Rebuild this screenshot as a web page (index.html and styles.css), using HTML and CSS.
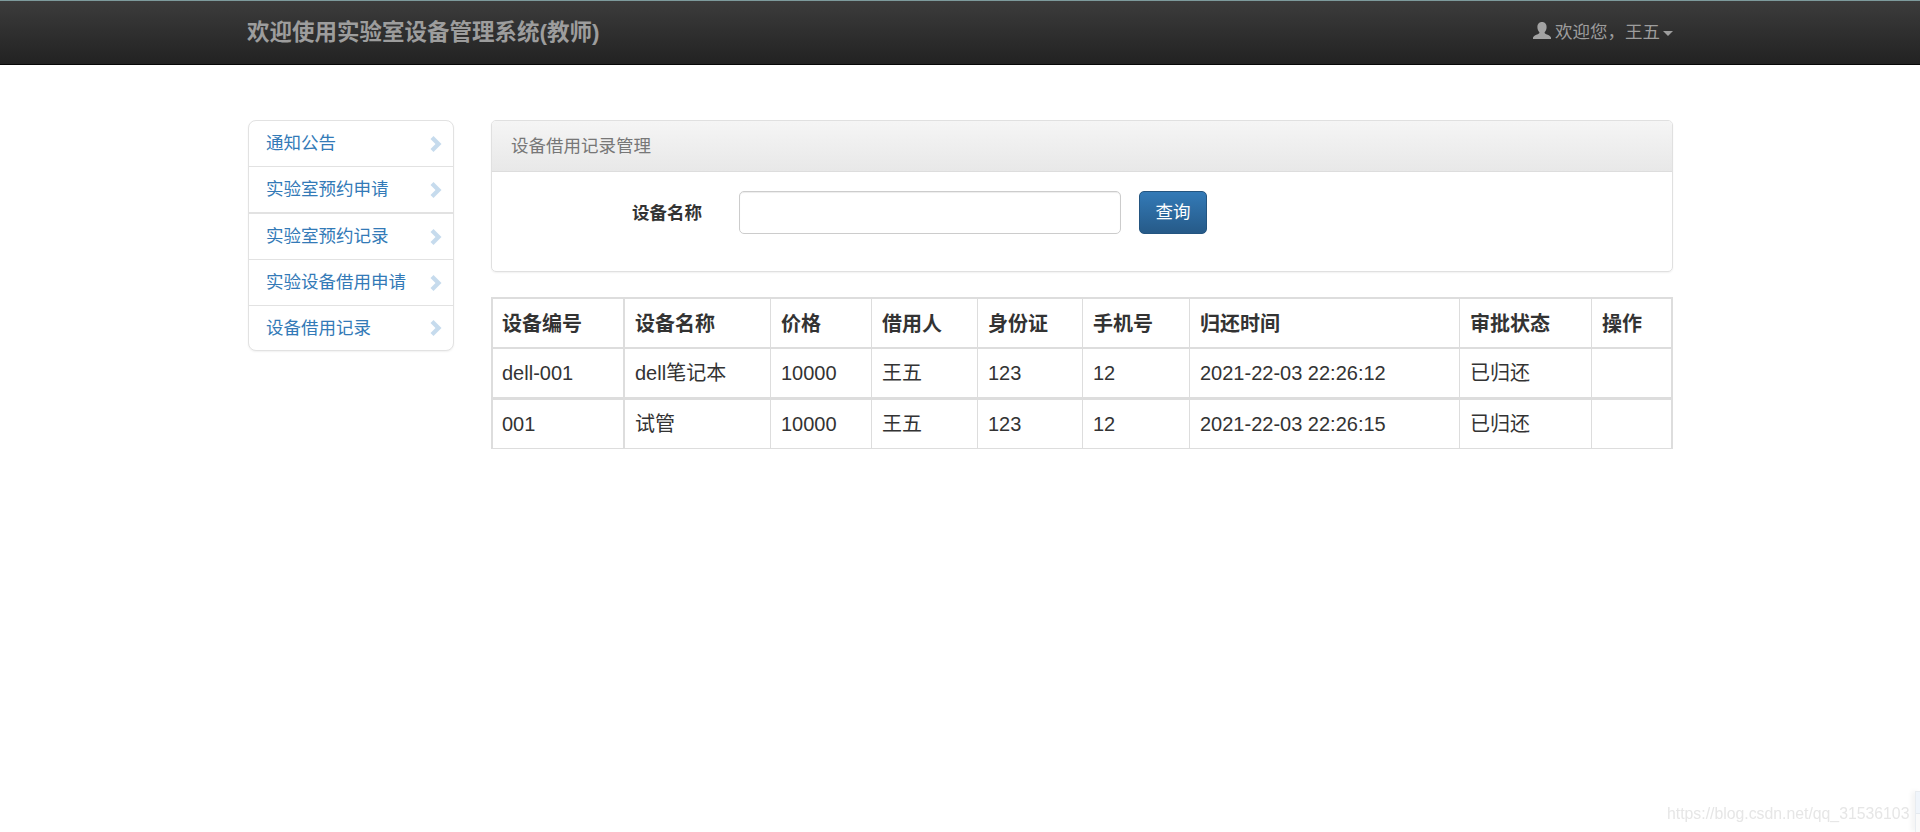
FILE: index.html
```html
<!DOCTYPE html>
<html lang="zh-CN">
<head>
<meta charset="utf-8">
<title>实验室设备管理系统</title>
<link rel="stylesheet" href="styles.css">
</head>
<body>
<header class="navbar">
  <div class="navbar-inner">
    <a class="brand">欢迎使用实验室设备管理系统(教师)</a>
    <a class="user">
      <svg class="user-icon" viewBox="0 0 20 20" aria-hidden="true"><path d="M10 1c3 0 4.600 2.200 4.600 5.200 0 2-.8 3.800-2 5 0 1 .5 1.500 1.600 2 2 .8 4.300 1.500 4.800 3.300V18H1v-1.500c.5-1.800 2.800-2.500 4.800-3.300 1.100-.5 1.600-1 1.600-2-1.200-1.200-2-3-2-5C5.400 3.200 7 1 10 1z"/></svg>
      <span class="user-name">欢迎您，王五</span><i class="caret"></i>
    </a>
  </div>
</header>
<div class="layout">
  <nav class="side">
    <a class="side-item"><span>通知公告</span><svg class="chev" viewBox="0 0 12 16"><path d="M3.500 0 11.500 8 3.500 16 0.500 13 5.500 8 0.500 3z"/></svg></a>
    <a class="side-item"><span>实验室预约申请</span><svg class="chev" viewBox="0 0 12 16"><path d="M3.500 0 11.500 8 3.500 16 0.500 13 5.500 8 0.500 3z"/></svg></a>
    <a class="side-item thick"><span>实验室预约记录</span><svg class="chev" viewBox="0 0 12 16"><path d="M3.500 0 11.500 8 3.500 16 0.500 13 5.500 8 0.500 3z"/></svg></a>
    <a class="side-item"><span>实验设备借用申请</span><svg class="chev" viewBox="0 0 12 16"><path d="M3.500 0 11.500 8 3.500 16 0.500 13 5.500 8 0.500 3z"/></svg></a>
    <a class="side-item last"><span>设备借用记录</span><svg class="chev" viewBox="0 0 12 16"><path d="M3.500 0 11.500 8 3.500 16 0.500 13 5.500 8 0.500 3z"/></svg></a>
  </nav>
  <main class="content">
    <section class="panel">
      <div class="panel-head">设备借用记录管理</div>
      <form class="panel-body">
        <label class="field-label">设备名称</label>
        <input class="field-input" type="text">
        <button class="btn" type="button">查询</button>
      </form>
    </section>
    <table class="records">
      <thead>
        <tr class="row-head"><th>设备编号</th><th>设备名称</th><th>价格</th><th>借用人</th><th>身份证</th><th>手机号</th><th>归还时间</th><th>审批状态</th><th>操作</th></tr>
      </thead>
      <tbody>
        <tr class="row-a"><td>dell-001</td><td>dell笔记本</td><td>10000</td><td>王五</td><td>123</td><td>12</td><td>2021-22-03 22:26:12</td><td>已归还</td><td></td></tr>
        <tr class="row-b"><td>001</td><td>试管</td><td>10000</td><td>王五</td><td>123</td><td>12</td><td>2021-22-03 22:26:15</td><td>已归还</td><td></td></tr>
      </tbody>
    </table>
  </main>
</div>
<div class="watermark">https://blog.csdn.net/qq_31536103</div>
<div class="edge-widget"></div>
</body>
</html>
```

FILE: styles.css
```css
* { box-sizing: border-box; }
html, body { margin: 0; padding: 0; height: 100%; overflow: hidden; }
body {
  background: #fff;
  color: #333;
  font-family: "Liberation Sans", "Noto Sans CJK SC", sans-serif;
  font-size: 17.5px;
}
.navbar {
  height: 65px;
  background: linear-gradient(to bottom, #3c3c3c, #222);
  border-top: 1px solid #7d9a9c;
  border-bottom: 1px solid #080808;
}
.navbar-inner {
  width: 1426px;
  margin-left: 247px;
  height: 100%;
  display: flex;
  align-items: center;
  justify-content: space-between;
}
.brand { font-size: 22.500px; font-weight: 700; color: #9d9d9d; padding-bottom: 5px; }
.user { display: flex; align-items: center; color: #9d9d9d; }
.user-name { padding-bottom: 4px; }
.user-icon { width: 20px; height: 20px; fill: #a3a3a3; margin-right: 3px; margin-top: -4px; }
.caret {
  width: 0; height: 0; margin-left: 3px; margin-top: 1px;
  border-top: 5px solid #9d9d9d;
  border-left: 5px solid transparent;
  border-right: 5px solid transparent;
}
.layout {
  width: 1425px;
  margin-left: 248px;
  padding-top: 55px;
  display: flex;
  gap: 37px;
  align-items: flex-start;
}
.side {
  width: 206px;
  flex: none;
  background: #fff;
  border: 1px solid #e2e2e2;
  border-radius: 8px;
  box-shadow: 0 1px 2px rgba(0,0,0,.06);
}
.side-item {
  height: 46px;
  display: flex;
  align-items: center;
  justify-content: space-between;
  padding: 0 11px 0 17px;
  color: #337ab7;
  border-top: 1px solid #e2e2e2;
}
.side-item span { padding-bottom: 4px; }
.side-item:first-child { border-top: 0; height: 45px; }
.side-item.thick { border-top-width: 2px; height: 47px; }
.side-item.last { height: 45px; }
.chev { width: 12px; height: 16px; fill: #c6dbed; flex: none; }
.content { width: 1182px; flex: none; }
.panel {
  height: 152px;
  border: 1px solid #e0e0e0;
  border-radius: 5px;
  box-shadow: 0 1px 2px rgba(0,0,0,.06);
  overflow: hidden;
}
.panel-head {
  height: 51px;
  padding: 0 0 4px 19px;
  display: flex;
  align-items: center;
  color: #777;
  background: linear-gradient(to bottom, #f5f5f5, #e8e8e8);
  border-bottom: 1px solid #ddd;
}
.panel-body {
  display: flex;
  align-items: center;
  padding-top: 19px;
}
.field-label { width: 210px; padding-bottom: 2px; text-align: right; font-weight: 700; color: #333; font-size: 17.5px; }
.field-input {
  width: 382px;
  height: 43px;
  margin-left: 37px;
  border: 1px solid #ccc;
  border-radius: 5px;
  box-shadow: inset 0 1px 1px rgba(0,0,0,.075);
  background: #fff;
}
.btn {
  width: 68px;
  height: 43px;
  margin-left: 18px;
  padding: 0 0 4px;
  border: 1px solid #245580;
  border-radius: 5px;
  color: #fff;
  font: inherit;
  background: linear-gradient(to bottom, #337ab7, #265a88);
}
.records {
  width: 1182px;
  margin-top: 25px;
  table-layout: fixed;
  border-collapse: separate;
  border-spacing: 0;
  font-size: 20px;
}
.records th, .records td {
  padding: 0 0 1px 10px;
  text-align: left;
  vertical-align: middle;
  border-right: 1px solid #ddd;
  border-bottom: 1px solid #ddd;
  white-space: nowrap;
  line-height: 24px;
}
.records th { padding-bottom: 0; padding-top: 1px; font-weight: 700; border-top: 2px solid #ddd; border-bottom-width: 2px; height: 52px; }
.row-a td { height: 51px; border-bottom-width: 3px; }
.row-b td { height: 49px; }
.records th:first-child, .records td:first-child { border-left: 2px solid #ddd; width: 134px; padding-left: 9px; border-right-width: 2px; }
.records th:nth-child(2) { width: 146px; }
.records th:nth-child(3) { width: 101px; }
.records th:nth-child(4) { width: 106px; }
.records th:nth-child(5) { width: 105px; }
.records th:nth-child(6) { width: 107px; }
.records th:nth-child(7) { width: 270px; }
.records th:nth-child(8) { width: 132px; }
.records th:nth-child(9) { width: 81px; }
.records th:last-child, .records td:last-child { border-right-width: 2px; }
.watermark {
  position: absolute;
  left: 1667px;
  top: 804px;
  font-size: 15.800px;
  line-height: 20px;
  color: #e6e6e6;
  white-space: nowrap;
  filter: blur(.4px);
}
.edge-widget {
  position: absolute;
  right: 0;
  top: 791px;
  width: 5px;
  height: 41px;
  background: linear-gradient(to bottom, #f0f5fb 0, #f0f5fb 21px, #e4e9ee 21px, #e4e9ee 22px, #fafafa 22px);
  border-left: 1px solid #e8ecf0;
  border-top: 1px solid #e8ecf0;
  box-shadow: -3px 0 5px rgba(0,0,0,.06);
}
```
